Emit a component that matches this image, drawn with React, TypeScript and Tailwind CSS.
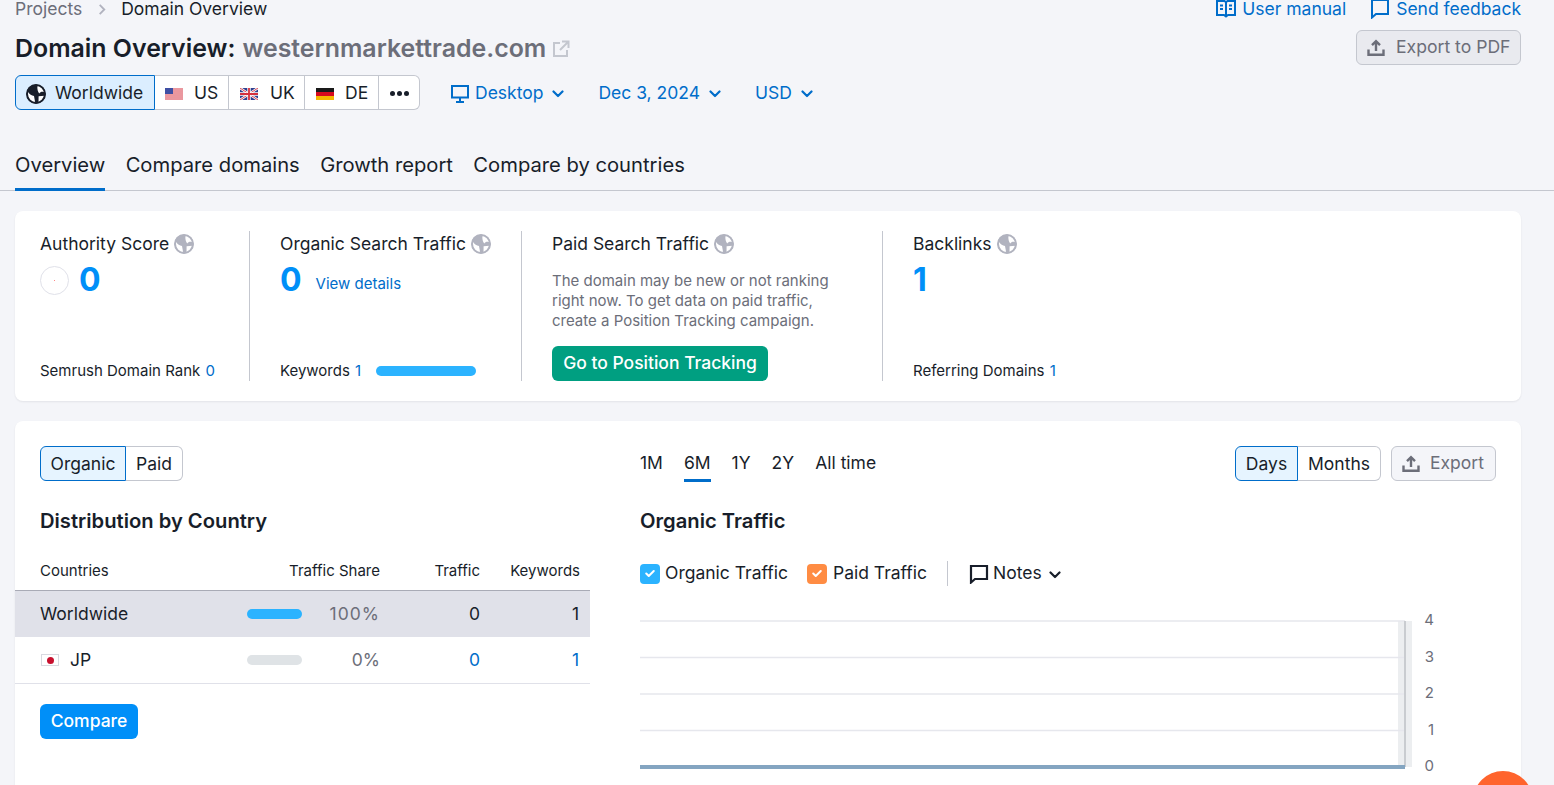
const GlobeIcon = ({ className }: { className: string }) => (
  <svg viewBox="0 0 20 20" className={className}>
    <circle cx="10" cy="10" r="9.5" fill="currentColor" />
    <path d="M1.800 7.500c1.800 3.200 3.800 4.200 6.200 4.400l1.200 6.500C5 18.200 1.500 14.500 1.500 10c0-.9.100-1.700.300-2.500zM11.500 1.500c3.500.6 6.300 3.200 7 6.800-2.200-.9-4.300-.5-5.100 1.300-1.500-1.300-2.500-4.700-1.900-8.100zM12.600 12.300l5.900-.6c-.6 3.200-3 5.700-6 6.500z" fill="#fff" />
    <circle cx="10" cy="10" r="9" fill="none" stroke="currentColor" strokeWidth="2" />
  </svg>
);

const UploadIcon = ({ className }: { className: string }) => (
  <svg viewBox="0 0 18 18" fill="none" stroke="currentColor" strokeWidth="2.4" className={className}>
    <path d="M9 12V2.5M5 6.200 9 2.200l4 4M1.500 10.500v5.300h15v-5.300" />
  </svg>
);

const ChevronIcon = ({ className }: { className: string }) => (
  <svg viewBox="0 0 12 8" fill="none" stroke="currentColor" strokeWidth="2.200" strokeLinecap="round" strokeLinejoin="round" className={className}>
    <path d="M1.5 1.5 6 6l4.5-4.5" />
  </svg>
);

const CheckBox = ({ color }: { color: string }) => (
  <span className={`flex h-5 w-5 items-center justify-center rounded-[4px] ${color}`}>
    <svg viewBox="0 0 12 10" fill="none" stroke="#fff" strokeWidth="2.4" strokeLinecap="round" strokeLinejoin="round" className="h-[9px] w-[10px]">
      <path d="M1.5 5 4.5 8l6-6" />
    </svg>
  </span>
);

const UsFlag = () => (
  <svg viewBox="0 0 18 12" className="h-3 w-[18px]">
    <rect width="18" height="12" fill="#fff" />
    <path d="M0 1h18M0 3h18M0 5h18M0 7h18M0 9h18M0 11h18" stroke="#d5303e" strokeWidth="1" />
    <rect width="8" height="6" fill="#3f4fa3" />
  </svg>
);

const UkFlag = () => (
  <svg viewBox="0 0 18 12" className="h-3 w-[18px]">
    <rect width="18" height="12" fill="#2f3f8f" />
    <path d="M0 0l18 12M18 0 0 12" stroke="#fff" strokeWidth="2.4" />
    <path d="M0 0l18 12M18 0 0 12" stroke="#d5303e" strokeWidth="0.9" />
    <path d="M9 0v12M0 6h18" stroke="#fff" strokeWidth="3.4" />
    <path d="M9 0v12M0 6h18" stroke="#d5303e" strokeWidth="1.8" />
  </svg>
);

const DeFlag = () => (
  <svg viewBox="0 0 18 12" className="h-3 w-[18px]">
    <rect width="18" height="4" fill="#1a1a1a" />
    <rect y="4" width="18" height="4" fill="#d60a1e" />
    <rect y="8" width="18" height="4" fill="#f5b800" />
  </svg>
);

const MetricTitle = ({ title }: { title: string }) => (
  <div className="flex h-[26px] items-center gap-[5px] text-[17.500px] text-[#181e2a]">
    {title}
    <GlobeIcon className="h-5 w-5 text-[#b1b3bf]" />
  </div>
);

const ranges = ["1M", "6M", "1Y", "2Y", "All time"];
const axisLabels = ["4", "3", "2", "1", "0"];

export default function App() {
  return (
    <div className="relative h-[785px] overflow-hidden bg-[#f4f5f9] font-['Inter',sans-serif] text-[#181e2a]">
      {/* Header */}
      <div className="-mt-[4px] flex h-[26px] items-center justify-between pl-[15px] pr-[33px] text-[17.500px]">
        <div className="flex items-center">
          <span className="text-[#6c6e79]">Projects</span>
          <svg viewBox="0 0 8 12" fill="none" stroke="#b1b3bf" strokeWidth="2" className="ml-[16px] mr-[15px] h-[11px] w-[8px]">
            <path d="M1.5 1 6.5 6l-5 5" />
          </svg>
          <span>Domain Overview</span>
        </div>
        <div className="flex items-center gap-[24px] text-[#006dca]">
          <span className="flex items-center gap-[6px]">
            <svg viewBox="0 0 20 20" fill="none" stroke="currentColor" strokeWidth="2" className="h-5 w-5">
              <path d="M1 2h7.5L10 3.2 11.5 2H19v14h-7l-2 1.5L8 16H1zM10 3.5v13" />
              <path d="M4 6.5h3M4 10h3M13 6.5h3M13 10h3" />
            </svg>
            User manual
          </span>
          <span className="flex items-center gap-[6px]">
            <svg viewBox="0 0 20 20" fill="none" stroke="currentColor" strokeWidth="2" className="h-5 w-5">
              <path d="M2 1h16v14H6l-4 3.5z" />
            </svg>
            Send feedback
          </span>
        </div>
      </div>

      <div className="mt-[8px] flex items-center justify-between pl-[15px] pr-[33px]">
        <div className="flex h-[35px] items-center pt-[2px] text-[24.900px] font-semibold">
          Domain Overview:
          <span className="ml-[7px] text-[#6c6e79]">westernmarkettrade.com</span>
          <svg viewBox="0 0 18 18" fill="none" stroke="#c4c7cf" strokeWidth="2" className="ml-[6px] h-[18px] w-[18px]">
            <path d="M8 3H2v13h13v-6M10 1.5h6.5V8M16 2 8 10" />
          </svg>
        </div>
        <button className="flex h-[35px] w-[165px] items-center gap-[11px] rounded-md border border-[#c4c7cf] bg-[#e9eaef] pl-[10px] text-[17.600px] text-[#6c6e79]">
          <UploadIcon className="h-[18px] w-[18px]" />
          Export to PDF
        </button>
      </div>

      {/* Database selector */}
      <div className="mt-[10px] flex h-[35px] items-center pl-[15px] text-[17.500px]">
        <div className="flex h-full">
          <div className="flex w-[140px] items-center gap-[9px] rounded-l-md border border-[#006dca] bg-[#dbeeff] pl-[10px] pt-[2px]">
            <GlobeIcon className="h-[20px] w-[20px] text-[#181e2a]" />
            Worldwide
          </div>
          <div className="flex w-[74px] items-center gap-[11px] border-y border-r border-[#c4c7cf] bg-white pl-[10px] pt-[2px]">
            <UsFlag />
            US
          </div>
          <div className="flex w-[76px] items-center gap-[12px] border-y border-r border-[#c4c7cf] bg-white pl-[11px] pt-[2px]">
            <UkFlag />
            UK
          </div>
          <div className="flex w-[74px] items-center gap-[11px] border-y border-r border-[#c4c7cf] bg-white pl-[11px] pt-[2px]">
            <DeFlag />
            DE
          </div>
          <div className="flex w-[41px] items-center justify-center gap-[2px] rounded-r-md border-y border-r border-[#c4c7cf] bg-white pt-[2px]">
            <span className="h-[5px] w-[5px] rounded-full bg-[#181e2a]" />
            <span className="h-[5px] w-[5px] rounded-full bg-[#181e2a]" />
            <span className="h-[5px] w-[5px] rounded-full bg-[#181e2a]" />
          </div>
        </div>
        <div className="ml-[31px] flex h-full items-center gap-[6px] pt-[2px] text-[#006dca]">
          <svg viewBox="0 0 18 18" fill="none" stroke="currentColor" strokeWidth="2" className="h-[18px] w-[18px]">
            <path d="M1 1h16v11.500H1zM9 12.500V17M5 17h8" />
          </svg>
          Desktop
          <ChevronIcon className="ml-[2px] h-[8px] w-[14px]" />
        </div>
        <div className="ml-[33px] flex h-full items-center gap-[8px] pt-[2px] text-[#006dca]">
          Dec 3, 2024
          <ChevronIcon className="h-[8px] w-[14px]" />
        </div>
        <div className="ml-[33px] flex h-full items-center gap-[8px] pt-[2px] text-[#006dca]">
          USD
          <ChevronIcon className="h-[8px] w-[14px]" />
        </div>
      </div>

      {/* Tabs */}
      <div className="mt-[38px] flex h-[43px] items-start gap-[20.400px] border-b border-[#c4c7cf] pl-[15px] text-[20.200px]">
        <div className="flex h-[43px] flex-col justify-between border-b-[3px] border-[#006dca] pt-[2px]">Overview</div>
        <div className="pt-[2px]">Compare domains</div>
        <div className="pt-[2px]">Growth report</div>
        <div className="pt-[2px]">Compare by countries</div>
      </div>

      {/* Metrics card */}
      <div className="ml-[15px] mr-[33px] mt-[20px] flex h-[190px] rounded-lg bg-white py-[20px] pl-[25px] shadow-[0_1px_2px_rgba(24,30,42,0.08)]">
        <div className="flex w-[210px] flex-col border-r border-[#c4c7cf]">
          <MetricTitle title="Authority Score" />
          <div className="mt-[5px] flex items-center gap-[10px]">
            <span className="flex h-[29px] w-[29px] items-center justify-center rounded-full border border-[#e0e1e9]">
              <span className="h-[1px] w-[1px] bg-[#ff8786]" />
            </span>
            <span className="text-[32px] font-bold leading-[36px] text-[#008ff8]">0</span>
          </div>
          <div className="mt-auto text-[15px] leading-[20px]">
            Semrush Domain Rank <span className="ml-[1px] text-[#006dca]">0</span>
          </div>
        </div>
        <div className="flex w-[272px] flex-col border-r border-[#c4c7cf] pl-[30px]">
          <MetricTitle title="Organic Search Traffic" />
          <div className="mt-[5px] flex items-center">
            <span className="text-[32px] font-bold leading-[36px] text-[#008ff8]">0</span>
            <span className="ml-[14px] mt-[8px] text-[15px] text-[#006dca]">View details</span>
          </div>
          <div className="mt-auto flex items-center text-[15px] leading-[20px]">
            Keywords <span className="ml-[5px] text-[#006dca]">1</span>
            <span className="ml-[15px] h-[10px] w-[100px] rounded-full bg-[#2bb3ff]" />
          </div>
        </div>
        <div className="flex w-[361px] flex-col border-r border-[#c4c7cf] pl-[30px]">
          <MetricTitle title="Paid Search Traffic" />
          <p className="mt-[14px] text-[15px] leading-[20px] text-[#6c6e79]">
            The domain may be new or not ranking
            <br />
            right now. To get data on paid traffic,
            <br />
            create a Position Tracking campaign.
          </p>
          <button className="mt-auto flex h-[35px] w-[216px] items-center justify-center rounded-md bg-[#009f81] text-[17.500px] font-medium text-white">
            Go to Position Tracking
          </button>
        </div>
        <div className="flex flex-col pl-[30px]">
          <MetricTitle title="Backlinks" />
          <div className="mt-[5px] text-[32px] font-bold leading-[36px] text-[#008ff8]">1</div>
          <div className="mt-auto text-[15px] leading-[20px]">
            Referring Domains <span className="ml-[1px] text-[#006dca]">1</span>
          </div>
        </div>
      </div>

      {/* Distribution + chart card */}
      <div className="ml-[15px] mr-[33px] mt-[20px] flex h-[400px] rounded-t-lg bg-white pt-[25px] shadow-[0_1px_2px_rgba(24,30,42,0.08)]">
        <div className="w-[575px]">
          <div className="ml-[25px] flex h-[35px] text-[17.500px]">
            <div className="flex w-[86px] items-center justify-center rounded-l-md border border-[#006dca] bg-[#e6f4ff] pt-[2px]">Organic</div>
            <div className="flex w-[57px] items-center justify-center rounded-r-md border-y border-r border-[#c4c7cf] pt-[2px]">Paid</div>
          </div>
          <h2 className="ml-[25px] mt-[26px] text-[20.200px] font-semibold leading-[28px]">Distribution by Country</h2>
          <div className="mt-[26px] flex h-[30px] items-start border-b border-[#a9abb6] pl-[25px] pr-[10px] text-[15px] leading-[20px]">
            <span className="flex-1">Countries</span>
            <span className="w-[120px] text-right">Traffic Share</span>
            <span className="w-[100px] text-right">Traffic</span>
            <span className="w-[100px] text-right">Keywords</span>
          </div>
          <div className="flex h-[46px] items-center bg-[#e0e1e9] pl-[25px] pr-[11px] text-[17.500px]">
            <span className="flex-1">Worldwide</span>
            <span className="h-[10px] w-[55px] rounded-full bg-[#2bb3ff]" />
            <span className="w-[78px] text-right tracking-[1px] text-[#6c6e79]">100%</span>
            <span className="w-[100px] text-right">0</span>
            <span className="w-[99px] text-right">1</span>
          </div>
          <div className="flex h-[47px] items-center border-b border-[#e0e1e9] pl-[26px] pr-[11px] text-[17.500px]">
            <span className="flex flex-1 items-center gap-[11px]">
              <span className="flex h-[12px] w-[18px] items-center justify-center border border-[#d8d9e0]">
                <span className="h-[7px] w-[7px] rounded-full bg-[#c8102e]" />
              </span>
              JP
            </span>
            <span className="h-[10px] w-[55px] rounded-full bg-[#dfe3e6]" />
            <span className="w-[78px] text-right text-[#6c6e79]">0%</span>
            <span className="w-[100px] text-right text-[#006dca]">0</span>
            <span className="w-[99px] text-right text-[#006dca]">1</span>
          </div>
          <button className="ml-[25px] mt-[20px] flex h-[35px] w-[98px] items-center justify-center rounded-md bg-[#008ff8] text-[17.500px] font-medium text-white">
            Compare
          </button>
        </div>

        <div className="ml-[50px] w-[856px]">
          <div className="flex h-[35px] items-center justify-between">
            <div className="flex h-full gap-[21px] text-[17.500px]">
              {ranges.map((range) => (
                <span
                  key={range}
                  className={range === "6M" ? "h-[36px] border-b-[3px] border-[#006dca] pt-[4px]" : "pt-[4px]"}
                >
                  {range}
                </span>
              ))}
            </div>
            <div className="flex h-full text-[17.500px]">
              <div className="flex w-[63px] items-center justify-center rounded-l-md border border-[#006dca] bg-[#e6f4ff] pt-[2px]">Days</div>
              <div className="flex w-[83px] items-center justify-center rounded-r-md border-y border-r border-[#c4c7cf] pt-[2px]">Months</div>
              <div className="ml-[10px] flex w-[105px] items-center gap-[10px] rounded-md border border-[#c4c7cf] bg-[#f4f5f9] pl-[10px] text-[#6c6e79]">
                <UploadIcon className="h-[18px] w-[18px]" />
                Export
              </div>
            </div>
          </div>
          <h2 className="mt-[26px] text-[20.200px] font-semibold leading-[28px]">Organic Traffic</h2>
          <div className="mt-[21px] flex h-[35px] items-center text-[17.500px]">
            <CheckBox color="bg-[#2bb3ff]" />
            <span className="ml-[5px]">Organic Traffic</span>
            <span className="ml-[19px]"><CheckBox color="bg-[#ff8c43]" /></span>
            <span className="ml-[6px]">Paid Traffic</span>
            <span className="ml-[20px] h-[25px] w-px bg-[#c4c7cf]" />
            <svg viewBox="0 0 20 20" fill="none" stroke="#181e2a" strokeWidth="2.200" className="ml-[21px] h-5 w-5">
              <path d="M2 2h16v13H6l-4 3.5z" />
            </svg>
            <span className="ml-[4px]">Notes</span>
            <ChevronIcon className="ml-[6px] mt-[2px] h-[8px] w-[14px]" />
          </div>
          {/* chart */}
          <svg viewBox="0 0 856 170" className="mt-[17px] h-[170px] w-[856px]">
            <rect x="758" y="13" width="14" height="146" fill="#eceef0" />
            <path d="M0 13h765M0 49.500h765M0 86h765M0 122.500h765" stroke="#e6e7ed" strokeWidth="1.500" />
            <rect x="764" y="13" width="2" height="146" fill="#c9ccd0" />
            <rect x="0" y="157" width="765" height="4" fill="#84a5c1" />
            {axisLabels.map((label, i) => (
              <text key={label} x="794" y={17 + i * 36.500} textAnchor="end" fontSize="15" fill="#6c6e79">
                {label}
              </text>
            ))}
          </svg>
        </div>
      </div>

      {/* Chat widget peeking in at the bottom */}
      <div className="absolute left-[1473px] top-[771px] h-[60px] w-[60px] rounded-full bg-[#ff642d]" />
    </div>
  );
}
